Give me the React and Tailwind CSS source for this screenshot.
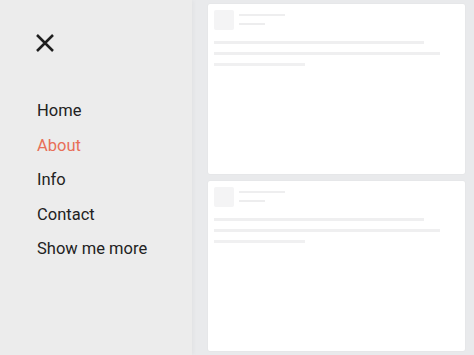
import { useState } from 'react'

const links = ['Home', 'About', 'Info', 'Contact', 'Show me more']

function SkeletonCard() {
  return (
    <div className="h-[170px] bg-white rounded-[2px] px-[6px] py-[6px] shadow-[0_0_2px_rgba(0,0,0,0.06)]">
      <div className="flex gap-[5px]">
        <div className="w-[20px] h-[20px] bg-[#f4f4f5] rounded-[2px]" />
        <div className="pt-[4px] flex flex-col gap-[7px]">
          <div className="w-[46px] h-[2px] bg-[#eeeeef]" />
          <div className="w-[26px] h-[2px] bg-[#ededee]" />
        </div>
      </div>
      <div className="mt-[11px] flex flex-col gap-[8px]">
        <div className="w-[210px] h-[3px] bg-[#efeff0]" />
        <div className="w-[226px] h-[3px] bg-[#efeff0]" />
        <div className="w-[91px] h-[3px] bg-[#f0f0f1]" />
      </div>
    </div>
  )
}

export default function App() {
  const [active] = useState('About')

  return (
    <div className="w-[474px] h-[355px] flex bg-[#e9eaec] overflow-hidden font-['Roboto',sans-serif]">
      {/* SIDEBAR */}
      <aside className="w-[192px] shrink-0 bg-[#ececec] pl-[37px] pt-[33px] shadow-[2px_0_4px_rgba(0,0,0,0.03)]">
        <button className="w-[20px] h-[20px] flex items-center justify-center -ml-[2px]">
          <svg width="20" height="20" viewBox="0 0 20 20" fill="none">
            <path d="M2 2L18 18M18 2L2 18" stroke="#1f1f1f" strokeWidth="2.5" />
          </svg>
        </button>
        <nav className="mt-[47px] flex flex-col gap-[12.5px]">
          {links.map((link) => (
            <a
              key={link}
              href="#"
              className={`text-[16.5px] leading-[22px] ${link === active ? 'text-[#e86f58]' : 'text-[#222222]'}`}
            >
              {link}
            </a>
          ))}
        </nav>
      </aside>

      {/* CONTENT */}
      <main className="flex-1 pl-[16px] pr-[9px] pt-[4px] flex flex-col gap-[7px]">
        <SkeletonCard />
        <SkeletonCard />
      </main>
    </div>
  )
}
